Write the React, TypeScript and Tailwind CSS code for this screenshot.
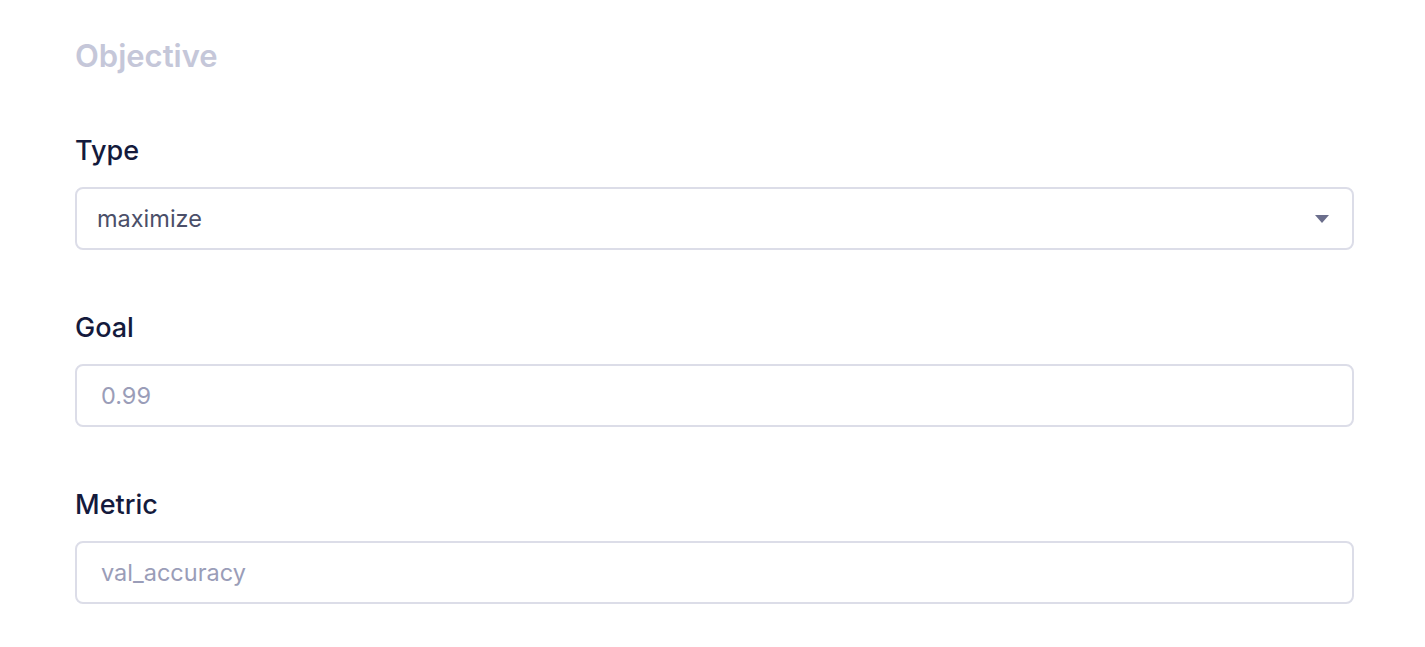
const fields = [
  { label: 'Goal', placeholder: '0.99' },
  { label: 'Metric', placeholder: 'val_accuracy' },
]

export default function App() {
  return (
    <div
      className="min-h-screen bg-white pt-[36px] pl-[75px] pr-[71px]"
      style={{ fontFamily: 'Inter, "Noto Sans", sans-serif' }}
    >
      <h2 className="text-[31px] font-semibold leading-[40px] text-[#c5c7d9]">Objective</h2>

      <div className="mt-[57px] flex flex-col gap-[60px]">
        <div>
          <label className="block text-[27px] font-medium leading-[35px] text-[#141a3c]">Type</label>
          <div className="mt-[19px] flex h-[63px] items-center justify-between rounded-[8px] border-2 border-[#dcdde8] bg-white pl-[20px] pr-[22px]">
            <span className="text-[23.5px] text-[#4b4f69]">maximize</span>
            <svg width="16" height="10" viewBox="0 0 16 10" aria-hidden="true">
              <path d="M1 1h14l-7 8z" fill="#6b6e8c" />
            </svg>
          </div>
        </div>

        {fields.map((f) => (
          <div key={f.label}>
            <label className="block text-[27px] font-medium leading-[35px] text-[#141a3c]">{f.label}</label>
            <input
              placeholder={f.placeholder}
              className="mt-[19px] block h-[63px] w-full rounded-[8px] border-2 border-[#dcdde8] bg-white px-[24px] text-[23.5px] text-[#4b4f69] outline-none placeholder:text-[#9a9db8]"
            />
          </div>
        ))}
      </div>
    </div>
  )
}
